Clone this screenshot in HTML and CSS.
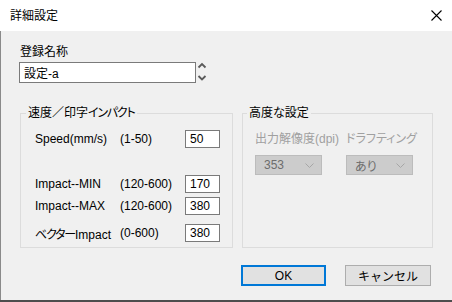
FILE: index.html
```html
<!DOCTYPE html>
<html lang="ja">
<head>
    <meta charset="UTF-8">
    <title>詳細設定</title>
    <link rel="stylesheet" href="styles.css">
</head>
<body>
    <div class="dialog">
        <div class="titlebar">
            <span class="title">詳細設定</span>
            <svg class="close" width="11" height="11" viewBox="0 0 11 11">
                <path d="M0.5 0.5 L10.5 10.5 M10.5 0.5 L0.5 10.5" stroke="#000" stroke-width="1.1" fill="none"/>
            </svg>
        </div>

        <div class="client">
            <div class="name-label">登録名称</div>
            <div class="name-row">
                <input class="name-input" type="text" value="設定-a">
                <svg class="spin" width="10" height="22" viewBox="0 0 10 22">
                    <path d="M1.5 6.5 L5 3 L8.5 6.5" stroke="#5a5a5a" stroke-width="1.8" fill="none"/>
                    <path d="M1.5 15 L5 18.5 L8.5 15" stroke="#5a5a5a" stroke-width="1.8" fill="none"/>
                </svg>
            </div>

            <div class="groups">
                <fieldset class="group group-speed">
                    <legend>速度／印字<span class="narrow-kana">インパクト</span></legend>
                    <div class="param-row">
                        <span class="param-name">Speed(mm/s)</span>
                        <span class="param-range">(1-50)</span>
                        <input class="param-input" type="text" value="50">
                    </div>
                    <div class="param-row row-min">
                        <span class="param-name">Impact--MIN</span>
                        <span class="param-range">(120-600)</span>
                        <input class="param-input" type="text" value="170">
                    </div>
                    <div class="param-row row-max">
                        <span class="param-name">Impact--MAX</span>
                        <span class="param-range">(120-600)</span>
                        <input class="param-input" type="text" value="380">
                    </div>
                    <div class="param-row row-vector">
                        <span class="param-name"><span class="narrow-kana">ベクター</span>Impact</span>
                        <span class="param-range">(0-600)</span>
                        <input class="param-input" type="text" value="380">
                    </div>
                </fieldset>

                <fieldset class="group group-advanced">
                    <legend>高度な設定</legend>
                    <div class="adv-grid">
                        <span class="adv-label">出力解像度(dpi)</span>
                        <span class="adv-label">ドラフティング</span>
                        <div class="combo">
                            <span class="combo-value">353</span>
                            <svg width="9" height="5" viewBox="0 0 9 5"><path d="M0.5 0.5 L4.5 4.5 L8.5 0.5" stroke="#a6a6a6" fill="none"/></svg>
                        </div>
                        <div class="combo">
                            <span class="combo-value">あり</span>
                            <svg width="9" height="5" viewBox="0 0 9 5"><path d="M0.5 0.5 L4.5 4.5 L8.5 0.5" stroke="#a6a6a6" fill="none"/></svg>
                        </div>
                    </div>
                </fieldset>
            </div>

            <div class="buttons">
                <button class="btn btn-default" type="button">OK</button>
                <button class="btn" type="button">キャンセル</button>
            </div>
        </div>
    </div>
</body>
</html>
```

FILE: styles.css
```css
body {
    margin: 0;
    padding: 0;
    font-family: "Liberation Sans", "Noto Sans CJK JP", sans-serif;
    font-size: 12px;
    font-feature-settings: "palt";
    color: #000;
    background-color: #f0f0f0;
}

.dialog {
    width: 452px;
    height: 302px;
    overflow: hidden;
    display: flex;
    flex-direction: column;
    box-sizing: border-box;
    border-bottom: 2px solid #4d4d4d;
}

.titlebar {
    height: 31px;
    flex: none;
    background-color: #fff;
    display: flex;
    align-items: center;
    justify-content: space-between;
    padding: 0 10px 0 10px;
}

.title {
    line-height: 14px;
    font-feature-settings: normal;
}

.close {
    display: block;
    margin-top: -1px;
}

.client {
    flex: 1;
    background-color: #f0f0f0;
    border-left: 1px solid #8a8a8a;
    padding: 14px 0 0 19px;
}

.name-label {
    line-height: 14px;
    font-feature-settings: normal;
}

.name-row {
    display: flex;
    align-items: center;
    margin-top: 2px;
}

.name-input {
    width: 177px;
    height: 21px;
    box-sizing: border-box;
    margin: 0 0 0 -1px;
    padding: 0 4px;
    border: 1px solid #7a7a7a;
    background-color: #fff;
    font-family: inherit;
    font-size: 12px;
    outline: none;
}

.spin {
    display: block;
    margin-left: 1px;
}

.narrow-kana {
    letter-spacing: -1.2px;
}

.groups {
    display: flex;
    gap: 9px;
    margin-top: 24px;
}

.group {
    margin: 0;
    border: 1px solid #dcdcdc;
    min-inline-size: 0;
}

.group legend {
    padding: 0 2px;
    line-height: 12px;
}

.group-speed {
    width: 213px;
    box-sizing: border-box;
    padding: 11px 12px 5px 14px;
}

.group-speed legend {
    margin-left: -9px;
}

.group-advanced {
    width: 191px;
    box-sizing: border-box;
    padding: 11px 10px 5px 12px;
}

.group-advanced legend {
    margin-left: -8px;
}

.param-row {
    display: grid;
    grid-template-columns: 85px 65px 35px;
    align-items: center;
    height: 18px;
    white-space: nowrap;
}

.row-min {
    margin-top: 27px;
}

.row-max {
    margin-top: 4px;
}

.row-vector {
    margin-top: 9px;
}

.param-input {
    width: 35px;
    height: 18px;
    box-sizing: border-box;
    margin: 0;
    padding: 0 4px;
    border: 1px solid #7a7a7a;
    background-color: #fff;
    font-family: inherit;
    font-size: 12px;
    outline: none;
}

.adv-grid {
    display: grid;
    grid-template-columns: 67px 67px;
    column-gap: 24px;
    row-gap: 7px;
}

.adv-label {
    line-height: 18px;
    color: #a0a0a0;
    white-space: nowrap;
}

.combo {
    height: 20px;
    box-sizing: border-box;
    border: 1px solid #bcbcbc;
    background-color: #cccccc;
    display: flex;
    align-items: center;
    justify-content: space-between;
    padding: 0 7px 0 8px;
    color: #6d6d6d;
}

.combo svg {
    display: block;
}

.buttons {
    display: flex;
    justify-content: flex-end;
    gap: 19px;
    margin-top: 17px;
    padding-right: 21px;
}

.btn {
    width: 86px;
    height: 21px;
    box-sizing: border-box;
    margin: 0;
    padding: 0;
    border: 1px solid #adadad;
    background-color: #e1e1e1;
    font-family: inherit;
    font-size: 12px;
    color: #000;
}

.btn-default {
    width: 85px;
    border: 2px solid #0078d7;
}
```
